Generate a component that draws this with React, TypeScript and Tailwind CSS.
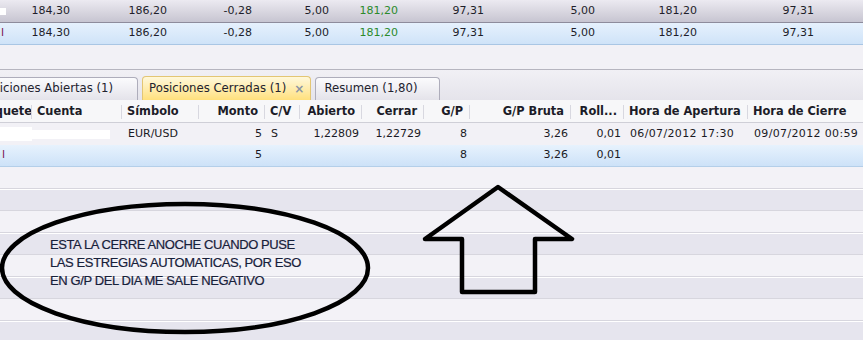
import React from "react";

const topCols = [
  "w-[70px]",
  "w-[97px]",
  "w-[85px]",
  "w-[77px]",
  "w-[69px]",
  "w-[86px]",
  "w-[111px]",
  "w-[102px]",
  "w-[117px]",
];
const topVals = ["184,30", "186,20", "-0,28", "5,00", "181,20", "97,31", "5,00", "181,20", "97,31"];

type Col = { label: string; w: string; right?: boolean };

const cols: Col[] = [
  { label: "Paquete", w: "w-[58px]" },
  { label: "Cuenta", w: "w-[90px]" },
  { label: "Símbolo", w: "w-[77px]" },
  { label: "Monto", w: "w-[66px]", right: true },
  { label: "C/V", w: "w-[35px]" },
  { label: "Abierto", w: "w-[62px]", right: true },
  { label: "Cerrar", w: "w-[62px]", right: true },
  { label: "G/P", w: "w-[46px]", right: true },
  { label: "G/P Bruta", w: "w-[101px]", right: true },
  { label: "Roll...", w: "w-[53px]", right: true },
  { label: "Hora de Apertura", w: "w-[124px]" },
  { label: "Hora de Cierre", w: "w-[141px]" },
];

const row1 = ["", "", "EUR/USD", "5", "S", "1,22809", "1,22729", "8", "3,26", "0,01", "06/07/2012 17:30", "09/07/2012 00:59"];
const row2 = ["", "", "", "5", "", "", "", "8", "3,26", "0,01", "", ""];

const TopRow = ({ selected }: { selected?: boolean }) => (
  <div
    className={
      selected
        ? "flex h-[22px] items-center border-b border-[#a9c6e4] bg-gradient-to-b from-[#e6f1fd] to-[#cfe3f8] text-[#1e1e2a]"
        : "flex h-[23px] items-center border-b border-[#8e8c9c] bg-gradient-to-b from-[#eceaf1] to-[#c7c5d1] text-[#1e1e2a]"
    }
  >
    {topVals.map((v, i) => (
      <div key={i} className={`${topCols[i]} flex items-center justify-between`}>
        {i === 0 ? (
          selected ? (
            <span className="pl-[1px] text-[#7a1050]">l</span>
          ) : (
            <span className="h-[7px] w-[6px] bg-white" />
          )
        ) : (
          <span />
        )}
        <span className={i === 4 ? "text-[#2b8a2b]" : ""}>{v}</span>
      </div>
    ))}
  </div>
);

const DataRow = ({ vals, selected }: { vals: string[]; selected?: boolean }) => (
  <div
    className={
      selected
        ? "flex h-[22px] items-center border-b border-[#b4cfe9] bg-gradient-to-b from-[#e7f2fd] to-[#cde2f8]"
        : "flex h-[22px] items-center bg-[#f2f1f6]"
    }
  >
    {cols.map((c, i) => (
      <div
        key={i}
        className={`${c.w} flex shrink-0 items-center whitespace-nowrap ${
          c.right ? "justify-end pr-[3px]" : "pl-[6px]"
        }`}
      >
        {i === 0 && !selected && <div className="ml-auto h-[14px] w-[32px] bg-white" />}
        {i === 0 && selected && <span className="ml-[22px] text-[#7a1050]">l</span>}
        {i === 1 && !selected && <div className="-ml-[6px] h-[9px] w-[78px] bg-white" />}
        <span className={i >= 10 ? "tracking-[0.35px]" : ""}>{vals[i]}</span>
      </div>
    ))}
  </div>
);

export default function App() {
  return (
    <div className="relative h-[340px] w-[863px] overflow-hidden bg-[#f2f1f6] font-['DejaVu_Sans',sans-serif] text-[11px] text-[#1a1a24]">
      <TopRow />
      <TopRow selected />
      <div className="h-[25px] border-b border-[#b6b5bf] bg-[#f2f1f6]" />

      {/* tabs */}
      <div className="flex h-[30px] items-end gap-[4px] bg-gradient-to-b from-[#f1f0f5] to-[#e5e4eb] text-[11.7px]">
        <div className="-ml-[29px] flex h-[23px] items-center rounded-t-[4px] border border-b-0 border-[#aeadbb] bg-gradient-to-b from-[#fbfbfd] to-[#e4e3ea] pl-[8px] pr-[24px] text-[#22222e]">
          Posiciones Abiertas (1)
        </div>
        <div className="flex h-[24px] items-center rounded-t-[4px] border border-b-0 border-[#e3c674] bg-gradient-to-b from-[#fff8da] to-[#ffe07c] pl-[6px] pr-[6px] text-[#22222e]">
          Posiciones Cerradas (1)
          <span className="ml-[8px] text-[12px] font-bold text-[#8a94a4]">×</span>
        </div>
        <div className="flex h-[23px] items-center rounded-t-[4px] border border-b-0 border-[#aeadbb] bg-gradient-to-b from-[#fbfbfd] to-[#e4e3ea] pl-[8px] pr-[21px] text-[#22222e]">
          Resumen (1,80)
        </div>
      </div>

      {/* header */}
      <div className="flex h-[23px] items-center border-b border-[#cfcfd7] bg-[#f7f7f9] pt-[2px] text-[11.4px] font-bold text-[#1c1c28]">
        <div className="-ml-[26px] flex">
          {cols.map((c, i) => (
            <div key={i} className={`${c.w} flex shrink-0 items-center`}>
              <span
                className={`flex-1 overflow-hidden whitespace-nowrap ${
                  c.right ? "pr-[6px] text-right" : "pl-[5px]"
                }`}
              >
                {c.label}
              </span>
              {i < cols.length - 1 ? (
                <span className="h-[14px] w-px bg-[#d8d8e0]" />
              ) : (
                <span className="pr-[1px] text-[7px] text-[#9a9aa6]">▼</span>
              )}
            </div>
          ))}
        </div>
      </div>

      <div className="-ml-[26px] w-[889px]">
        <DataRow vals={row1} />
        <DataRow vals={row2} selected />
      </div>

      {/* empty striped rows */}
      {Array.from({ length: 8 }).map((_, i) => (
        <div
          key={i}
          className={`h-[22px] border-b border-[#d7d6de] ${
            i % 2 === 0 ? "bg-[#f3f2f7]" : "border-t border-t-white bg-[#e6e5ee]"
          }`}
        />
      ))}

      {/* annotations drawn on top */}
      <svg className="absolute left-0 top-0" width="863" height="340" viewBox="0 0 863 340">
        <ellipse cx="185" cy="268" rx="183" ry="64" fill="none" stroke="#000" strokeWidth="4.5" />
        <polygon
          points="498,187 572,239 535,239 535,292 462,292 462,239 425,239"
          fill="none"
          stroke="#000"
          strokeWidth="4.5"
          strokeLinejoin="round"
        />
      </svg>
      <div className="absolute left-[50px] top-[236px] font-['Liberation_Sans',sans-serif] text-[13px] leading-[18px] tracking-[-0.4px] text-[#17203a] [-webkit-text-stroke:0.2px_#17203a]">
        <div>ESTA LA CERRE ANOCHE CUANDO PUSE</div>
        <div>LAS ESTREGIAS AUTOMATICAS, POR ESO</div>
        <div>EN G/P DEL DIA ME SALE NEGATIVO</div>
      </div>
    </div>
  );
}
